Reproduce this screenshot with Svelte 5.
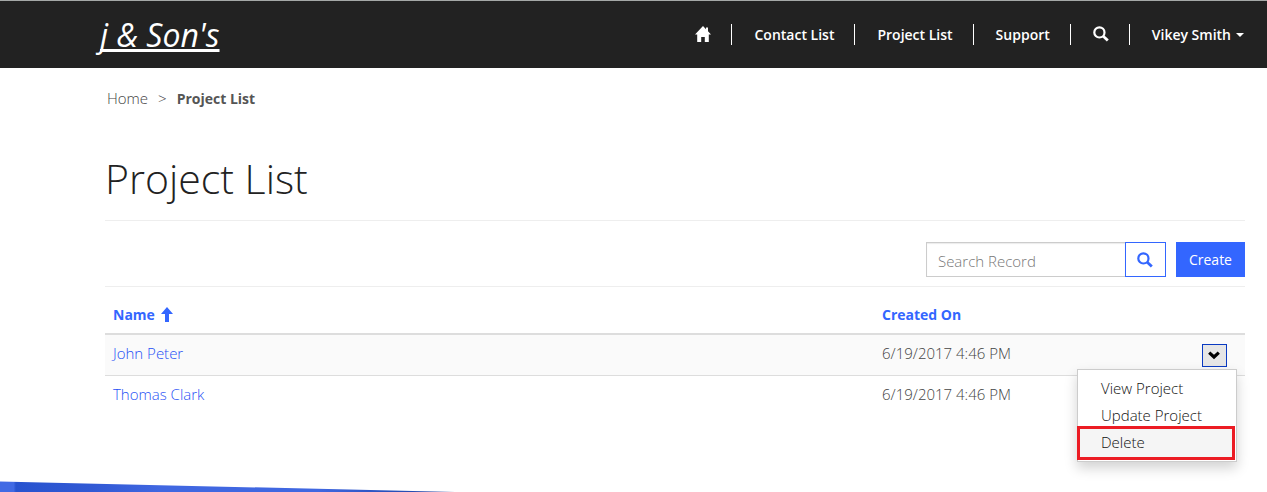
<script>
  const projects = [
    { name: 'John Peter', created: '6/19/2017 4:46 PM', open: true },
    { name: 'Thomas Clark', created: '6/19/2017 4:46 PM', open: false }
  ];
  const actions = ['View Project', 'Update Project', 'Delete'];
</script>

{#snippet magnifier(size)}
  <svg width={size} height={size} viewBox="0 0 16 16" aria-hidden="true">
    <circle cx="6.4" cy="6.4" r="5.1" fill="none" stroke="currentColor" stroke-width="2.2" />
    <path d="M10 10l4.8 4.6" fill="none" stroke="currentColor" stroke-width="2.8" />
  </svg>
{/snippet}

<div class="page">
  <header>
    <a class="brand" href="#home">j &amp; Son's</a>
    <nav aria-label="Main">
      <a href="#home" aria-label="Home">
        <svg class="house" width="16" height="16" viewBox="0 0 16 16" aria-hidden="true">
          <path d="M8 0L0 8.4h2.2V16h4v-5h3.6v5h4V8.4H16L13 5.2V1.4h-2v1.8z" fill="currentColor" />
        </svg>
      </a>
      <a href="#contacts">Contact List</a>
      <a href="#projects">Project List</a>
      <a href="#support">Support</a>
      <a href="#search" aria-label="Search">{@render magnifier(16)}</a>
      <a href="#profile">Vikey Smith<span class="caret"></span></a>
    </nav>
  </header>

  <main>
    <ol class="crumbs">
      <li><a href="#home">Home</a></li>
      <li aria-hidden="true">&gt;</li>
      <li class="current">Project List</li>
    </ol>

    <h1>Project List</h1>

    <div class="toolbar">
      <form class="search">
        <input type="text" placeholder="Search Record" aria-label="Search Record" />
        <button type="button" aria-label="Search">{@render magnifier(16)}</button>
      </form>
      <button type="button" class="create">Create</button>
    </div>

    <table>
      <thead>
        <tr>
          <th class="name">
            <a href="#name">Name
              <svg class="arrow" width="12" height="15" viewBox="0 0 12 15" aria-hidden="true">
                <path d="M6 0l6 7H8v8H4V7H0z" fill="currentColor" />
              </svg>
            </a>
          </th>
          <th class="created"><a href="#created">Created On</a></th>
          <th class="tools" aria-label="Actions"></th>
        </tr>
      </thead>
      <tbody>
        {#each projects as project}
          <tr>
            <td><a href="#project">{project.name}</a></td>
            <td>{project.created}</td>
            <td class="tools">
              {#if project.open}
                <div class="dropdown">
                  <button type="button" class="toggle" aria-label="Row actions" aria-expanded="true">
                    <svg width="13" height="9" viewBox="0 0 13 9" aria-hidden="true">
                      <path d="M1.2 1.6L6 6l4.8-4.4" fill="none" stroke="currentColor" stroke-width="3.2" />
                    </svg>
                  </button>
                  <ul class="menu">
                    {#each actions as action}
                      <li class:marked={action === 'Delete'}><a href="#action">{action}</a></li>
                    {/each}
                  </ul>
                </div>
              {/if}
            </td>
          </tr>
        {/each}
      </tbody>
    </table>
  </main>

  <svg class="ribbon" viewBox="0 0 460 11" aria-hidden="true">
    <defs>
      <linearGradient id="blue">
        <stop offset="0" stop-color="#416ae4" />
        <stop offset="0.03" stop-color="#416ae4" />
        <stop offset="0.035" stop-color="#2853cf" />
        <stop offset="0.2" stop-color="#3159d4" />
        <stop offset="0.35" stop-color="#4067e1" />
        <stop offset="0.7" stop-color="#4067e1" />
        <stop offset="0.85" stop-color="#2951bd" />
        <stop offset="1" stop-color="#24459c" />
      </linearGradient>
    </defs>
    <path d="M0 .5L455 11H0z" fill="url(#blue)" />
  </svg>
</div>

<style>
  :global(body) {
    margin: 0;
    background: #fff;
    overflow: hidden;
  }
  .page {
    display: flex;
    flex-direction: column;
    min-height: 100vh;
    color: #444;
    font: 300 15px/21px 'Open Sans', 'Noto Sans', sans-serif;
  }
  a {
    color: inherit;
    text-decoration: none;
  }
  header {
    display: flex;
    justify-content: space-between;
    box-sizing: border-box;
    height: 68px;
    padding: 0 23px 0 100px;
    border-top: 1px solid #a5a8a7;
    background: #222;
    color: #fff;
  }
  .brand {
    padding-top: 11px;
    font: italic 400 32px/46px 'Open Sans', sans-serif;
    text-decoration: underline;
    text-decoration-skip-ink: none;
    text-decoration-thickness: 3px;
  }
  nav {
    display: flex;
    align-items: flex-start;
    padding-top: 23px;
    font-size: 14px;
    font-weight: 600;
  }
  nav a {
    display: flex;
    align-items: center;
    height: 21px;
    padding: 0 20px 0 22px;
    border-left: 1px solid #fff;
  }
  nav a:first-child {
    border-left: 0;
  }
  nav a:last-child {
    padding-right: 0;
  }
  nav svg {
    margin-bottom: 2px;
  }
  .caret {
    margin-left: 5px;
    border: 4px solid transparent;
    border-top-color: #fff;
    border-bottom: 0;
  }
  main {
    flex: 1;
    padding: 20px 22px 0 105px;
  }
  .crumbs {
    display: flex;
    gap: 10px;
    margin: 0;
    padding: 0 2px;
    list-style: none;
  }
  .crumbs .current {
    color: #555;
    font-size: 14px;
    font-weight: 700;
  }
  h1 {
    margin: 39px 0 0;
    padding-bottom: 12px;
    border-bottom: 1px solid #eee;
    color: #222;
    font-size: 41px;
    font-weight: 300;
    line-height: 60px;
  }
  .toolbar {
    display: flex;
    justify-content: flex-end;
    gap: 10px;
    padding: 21px 0 9px;
    border-bottom: 1px solid #eee;
  }
  .search {
    display: flex;
  }
  input,
  button {
    box-sizing: border-box;
    height: 35px;
    border-radius: 0;
    font: inherit;
  }
  input {
    width: 200px;
    padding: 2px 11px 0;
    border: 1px solid #ccc;
    box-shadow: inset 0 1px 1px rgba(0, 0, 0, 0.08);
  }
  input::placeholder {
    color: #777;
  }
  .search button {
    display: grid;
    place-items: center;
    width: 41px;
    margin-left: -1px;
    padding: 0;
    border: 1px solid #36f;
    background: #fff;
    color: #36f;
  }
  .create {
    padding: 0 13px;
    border: 0;
    background: #36f;
    color: #fff;
    font-size: 14px;
    font-weight: 400;
  }
  table {
    width: 100%;
    border-collapse: collapse;
    table-layout: fixed;
  }
  th,
  td {
    padding: 8px 8px 11px;
    text-align: left;
    vertical-align: top;
  }
  th {
    padding: 17px 8px 8px;
    border-bottom: 2px solid #ddd;
    font-size: 14px;
    font-weight: 700;
  }
  .arrow {
    margin-left: 2px;
    vertical-align: -2px;
  }
  tbody tr:first-child td {
    background: #fafafa;
    border-bottom: 1px solid #ddd;
  }
  th a,
  td > a {
    color: #36f;
  }
  td > a {
    color: #1f50f5;
  }
  .created {
    width: 248px;
  }
  .tools {
    width: 92px;
    box-sizing: content-box;
  }
  td.tools {
    padding: 9px 18px 0 8px;
  }
  .created {
    width: 247px;
  }
  .dropdown {
    position: relative;
    display: flex;
    justify-content: flex-end;
  }
  .toggle {
    display: grid;
    place-items: center;
    width: 25px;
    height: 23px;
    padding: 0;
    border: 1px solid #0a3ac2;
    background: #e6e6e6;
    color: #000;
  }
  .menu {
    position: absolute;
    top: 25px;
    right: -10px;
    box-sizing: border-box;
    width: 160px;
    margin: 0;
    padding: 5px 0 0;
    border: 1px solid #ccc;
    background: #fff;
    background-clip: padding-box;
    box-shadow: 0 6px 12px rgba(0, 0, 0, 0.18);
    color: #111;
    list-style: none;
  }
  .menu a {
    display: block;
    padding: 3px 23px;
  }
  .marked {
    margin: -3px 1px 1px -1px;
    border: 3px solid #ec1c24;
    background: #f5f5f5;
  }
  .menu .marked a {
    padding: 3px 21px 4px;
  }
  .ribbon {
    display: block;
    width: 460px;
  }
</style>
